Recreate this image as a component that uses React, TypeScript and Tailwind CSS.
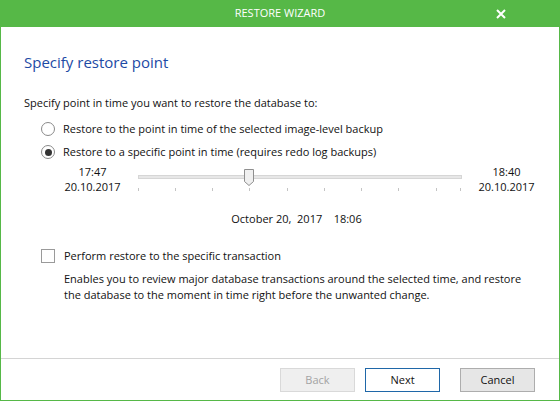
import React from "react";

const font = { fontFamily: "'Segoe UI', 'Open Sans', 'Noto Sans', sans-serif" };

function Radio({ checked }: { checked?: boolean }) {
    return (
        <span className="w-[14px] h-[14px] rounded-full border border-[#8a8a8a] bg-white flex items-center justify-center shrink-0">
            {checked && <span className="w-[7px] h-[7px] rounded-full bg-[#333]" />}
        </span>
    );
}

function Slider() {
    const ticks = [0, 37, 74, 111, 149, 186, 223, 260, 298, 322];
    return (
        <svg width="325" height="30" viewBox="0 0 325 30" className="block">
            <rect x="0.5" y="11.5" width="323" height="3" fill="#e7e7e7" stroke="#d6d6d6" />
            {ticks.map(t => (
                <line key={t} x1={t + 0.5} x2={t + 0.5} y1="24" y2="27" stroke="#c4c4c4" />
            ))}
            <path d="M106.5 5.5 H115.5 V17.5 L111 21.5 L106.5 17.5 Z" fill="#f0f0f0" stroke="#8f8f8f" />
        </svg>
    );
}

export default function App() {
    return (
        <div className="w-[560px] h-[401px] bg-white border border-[#56b847] flex flex-col text-[#111] text-[11px]" style={font}>
            {/* Title bar */}
            <div className="h-[27px] bg-[#56b847] -mx-px -mt-px flex items-center justify-center relative text-white text-[11px] shrink-0">
                <span>RESTORE WIZARD</span>
                <svg className="absolute right-[54px] top-[9px]" width="10" height="10" viewBox="0 0 10 10">
                    <path d="M1 1 L9 9 M9 1 L1 9" stroke="white" strokeWidth="2" />
                </svg>
            </div>

            {/* Body */}
            <div className="flex-1 pl-[23px] pr-[23px] pt-[24px]">
                <h1 className="text-[15px] leading-[22px] text-[#1d4aa5]">Specify restore point</h1>
                <p className="mt-[22px] leading-[16px]">Specify point in time you want to restore the database to:</p>

                <div className="pl-[17px]">
                    <label className="mt-[10px] flex items-center gap-[8px] leading-[16px]">
                        <Radio />
                        <span>Restore to the point in time of the selected image-level backup</span>
                    </label>
                    <label className="mt-[7px] flex items-center gap-[8px] leading-[16px]">
                        <Radio checked />
                        <span>Restore to a specific point in time (requires redo log backups)</span>
                    </label>
                </div>

                <div className="mt-[4px] pl-[40px] flex items-start leading-[15px]">
                    <div className="w-[57px] text-center">
                        <div>17:47</div>
                        <div>20.10.2017</div>
                    </div>
                    <div className="ml-[17px]">
                        <Slider />
                    </div>
                    <div className="ml-[15px] w-[57px] text-center">
                        <div>18:40</div>
                        <div>20.10.2017</div>
                    </div>
                </div>

                <p className="mt-[17px] leading-[16px] text-center pl-[33px] whitespace-pre">October 20,  2017    18:06</p>

                <div className="pl-[17px]">
                    <label className="mt-[21px] flex items-center gap-[9px] leading-[16px]">
                        <span className="w-[14px] h-[14px] border border-[#9a9a9a] bg-white shrink-0" />
                        <span>Perform restore to the specific transaction</span>
                    </label>
                    <p className="mt-[7px] pl-[23px] leading-[16px] whitespace-nowrap">
                        Enables you to review major database transactions around the selected time, and restore
                        <br />
                        the database to the moment in time right before the unwanted change.
                    </p>
                </div>
            </div>

            {/* Footer */}
            <div className="h-[42px] border-t border-[#d4d4d4] flex items-start justify-end pr-[24px] pt-[9px] shrink-0">
                <button className="w-[75px] h-[24px] bg-[#efefef] border border-[#d9d9d9] text-[#a3a3a3]">Back</button>
                <button className="ml-[10px] w-[75px] h-[24px] bg-white border border-[#1f67a8] text-[#111]">Next</button>
                <button className="ml-[20px] w-[75px] h-[24px] bg-[#e6e6e6] border border-[#adadad] text-[#111]">Cancel</button>
            </div>
        </div>
    );
}
